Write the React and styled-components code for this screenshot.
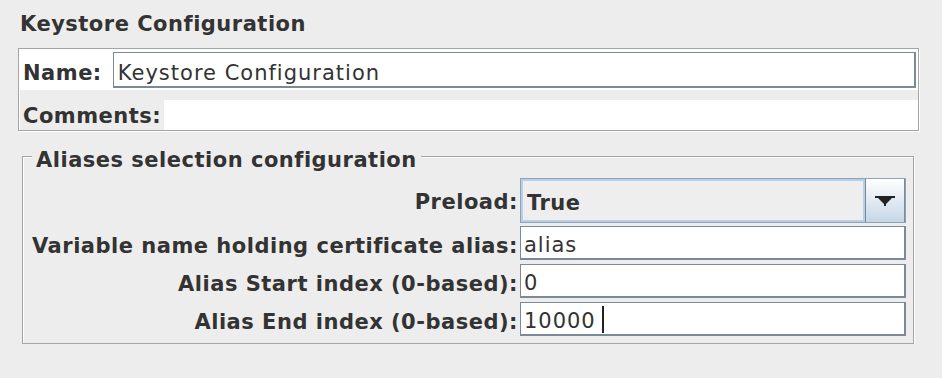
import React from 'react'
import styled, { createGlobalStyle } from 'styled-components'

const GlobalStyle = createGlobalStyle`
  html, body {
    margin: 0;
    padding: 0;
    background: #ededed;
  }
  body {
    font-family: "DejaVu Sans", "Liberation Sans", sans-serif;
    color: #333333;
  }
`

export default function App() {
  return (
    <>
      <GlobalStyle />
      <Page>
        <Title>Keystore Configuration</Title>
        <NamePanel>
          <NameRow>
            <Label $drop={5}>Name:</Label>
            <TextField>Keystore Configuration</TextField>
          </NameRow>
          <CommentsRow>
            <Label $drop={1}>Comments:</Label>
            <CommentsArea />
          </CommentsRow>
        </NamePanel>

        <Group>
          <Legend>Aliases selection configuration</Legend>
          <Form>
            <Label $drop={4} $right>Preload:</Label>
            <Combo>
              <ComboValue>True</ComboValue>
              <ArrowButton>
                <svg width="20" height="10" viewBox="0 0 20 10">
                  <polygon points="0,0 20,0 20,2 17,2 11,8 11,10 9,10 9,8 3,2 0,2" fill="#222" />
                </svg>
              </ArrowButton>
            </Combo>

            <Label $drop={6} $right>Variable name holding certificate alias:</Label>
            <Field>alias</Field>

            <Label $drop={5} $right>Alias Start index (0-based):</Label>
            <Field>0</Field>

            <Label $drop={6} $right>Alias End index (0-based):</Label>
            <Field>
              10000<Caret />
            </Field>
          </Form>
        </Group>
      </Page>
    </>
  )
}

const Page = styled.div`
  padding: 12px 23px 0 18px;
  font-size: 21px;
`

const Title = styled.div`
  font-weight: bold;
  letter-spacing: 0.5px;
  line-height: 24px;
  padding-left: 2px;
  margin-bottom: 12px;
`

const NamePanel = styled.div`
  border: 1px solid #a4a4a4;
  box-shadow: inset 1px 1px 0 #fff, 1px 1px 0 #fff;
`

const NameRow = styled.div`
  display: flex;
  align-items: center;
  gap: 11px;
  background: #fff;
  padding: 3px 2px 2px 4px;
`

const CommentsRow = styled.div`
  display: flex;
  align-items: center;
  gap: 3px;
  padding: 10px 0 0 4px;
`

const Label = styled.span`
  font-weight: bold;
  letter-spacing: 0.5px;
  line-height: 24px;
  white-space: nowrap;
  padding-top: ${p => p.$drop || 0}px;
  text-align: ${p => (p.$right ? 'right' : 'left')};
`

const TextField = styled.div`
  flex: 1;
  height: 36px;
  box-sizing: border-box;
  display: flex;
  align-items: center;
  padding: 6px 0 0 4px;
  letter-spacing: 1px;
  line-height: 24px;
  background: #fff;
  border-top: 1px solid #7a8a99;
  border-left: 1px solid #7a8a99;
  border-right: 2px solid #7a8a99;
  border-bottom: 2px solid #7a8a99;
`

const CommentsArea = styled.div`
  flex: 1;
  height: 30px;
  background: #fff;
`

const Group = styled.fieldset`
  margin: 10px 5px 0 4px;
  padding: 6px 6px 7px 9px;
  border: 1px solid #a4a4a4;
  box-shadow: inset 1px 1px 0 #fff, 1px 1px 0 #fff;
  min-width: 0;
`

const Legend = styled.legend`
  font-weight: bold;
  letter-spacing: 0.5px;
  line-height: 24px;
  padding: 7px 4px 0 4px;
  background: #ededed;
`

const Form = styled.div`
  display: grid;
  grid-template-columns: auto 1fr;
  column-gap: 2px;
  row-gap: 4px;
  align-items: center;
`

const Combo = styled.div`
  display: flex;
  height: 45px;
  box-sizing: border-box;
  border: 1px solid #8fa3b8;
  margin: 0 1px -1px 0;
`

const ComboValue = styled.div`
  flex: 1;
  display: flex;
  align-items: center;
  padding: 4px 0 0 6px;
  font-weight: bold;
  letter-spacing: 0.5px;
  line-height: 24px;
  background: #eeeeee;
  box-shadow: inset 0 0 0 2px #b8cfe5;
`

const ArrowButton = styled.div`
  width: 38px;
  display: flex;
  align-items: center;
  justify-content: center;
  border-left: 1px solid #7a8a99;
  border-right: 1px solid #7a8a99;
  background: linear-gradient(to bottom, #ffffff, #c6d6e6);
`

const Field = styled.div`
  height: 34px;
  box-sizing: border-box;
  display: flex;
  align-items: center;
  padding: 5px 0 0 3px;
  letter-spacing: 1px;
  line-height: 24px;
  background: #fff;
  border-top: 1px solid #7a8a99;
  border-left: 1px solid #7a8a99;
  border-right: 2px solid #7a8a99;
  border-bottom: 2px solid #7a8a99;
  margin-right: 1px;
`

const Caret = styled.span`
  display: inline-block;
  width: 2px;
  height: 27px;
  margin: -4px 0 0 6px;
  background: #222;
`
